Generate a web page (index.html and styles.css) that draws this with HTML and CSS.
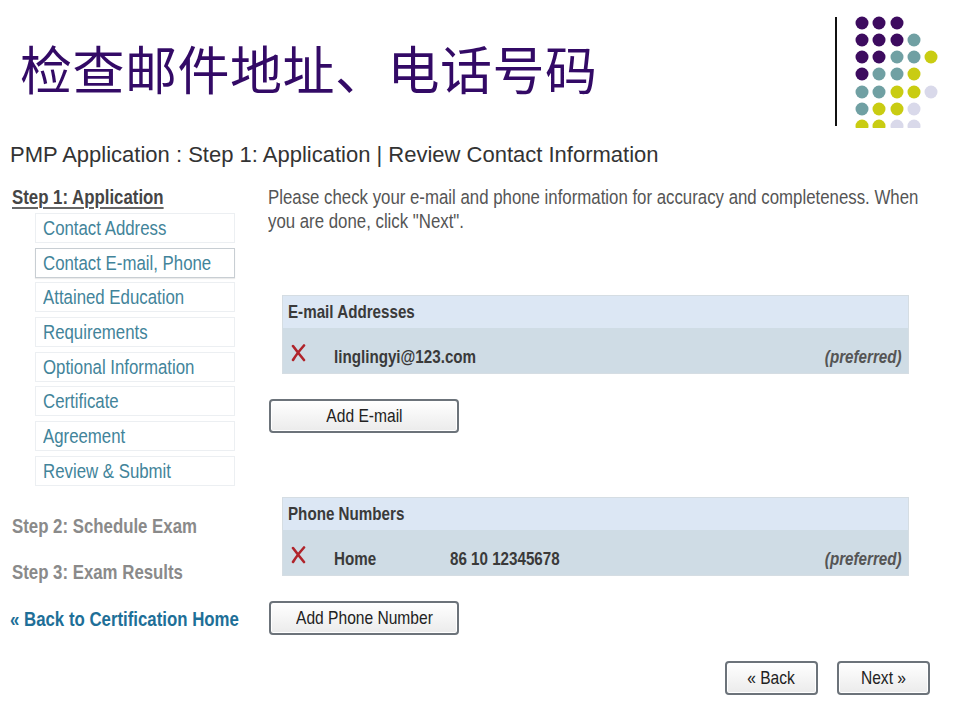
FILE: index.html
```html
<!DOCTYPE html>
<html lang="zh-CN">
<head>
    <meta charset="UTF-8">
    <meta name="viewport" content="width=device-width, initial-scale=1.0">
    <title>检查邮件地址、电话号码</title>
    <link rel="stylesheet" href="styles.css">
</head>
<body>
    <div class="slide">
        <header class="slide-head">
            <h1 class="slide-title">检查邮件地址、电话号码</h1>
            <svg class="deco" width="124" height="128" viewBox="0 0 124 128">
                <line x1="1" y1="17" x2="1" y2="126" stroke="#111" stroke-width="2"/>
                <g fill="#3d0b5f">
                    <circle cx="27" cy="23" r="6.5"/><circle cx="44" cy="23" r="6.5"/><circle cx="62" cy="23" r="6.5"/>
                    <circle cx="27" cy="40" r="6.5"/><circle cx="44" cy="40" r="6.5"/><circle cx="62" cy="40" r="6.5"/>
                    <circle cx="27" cy="57" r="6.5"/><circle cx="44" cy="57" r="6.5"/>
                    <circle cx="27" cy="74" r="6.5"/>
                </g>
                <g fill="#70a0a3">
                    <circle cx="79" cy="40" r="6.5"/>
                    <circle cx="62" cy="57" r="6.5"/><circle cx="79" cy="57" r="6.5"/>
                    <circle cx="44" cy="74" r="6.5"/><circle cx="62" cy="74" r="6.5"/>
                    <circle cx="27" cy="92" r="6.5"/><circle cx="44" cy="92" r="6.5"/>
                    <circle cx="27" cy="109" r="6.5"/>
                </g>
                <g fill="#c9cc12">
                    <circle cx="96" cy="57" r="6.5"/>
                    <circle cx="79" cy="74" r="6.5"/>
                    <circle cx="62" cy="92" r="6.5"/><circle cx="79" cy="92" r="6.5"/>
                    <circle cx="44" cy="109" r="6.5"/><circle cx="62" cy="109" r="6.5"/>
                    <circle cx="27" cy="126" r="6.5"/><circle cx="44" cy="126" r="6.5"/>
                </g>
                <g fill="#d9d9ea">
                    <circle cx="96" cy="92" r="6.5"/>
                    <circle cx="79" cy="109" r="6.5"/>
                    <circle cx="62" cy="126" r="6.5"/><circle cx="79" cy="126" r="6.5"/>
                </g>
            </svg>
        </header>

        <div class="app">
            <h2 class="app-title">PMP Application : Step 1: Application | Review Contact Information</h2>

            <div class="app-body">
                <nav class="steps">
                    <div class="step current"><span class="nx">Step 1: Application</span></div>
                    <ul class="substeps">
                        <li><span class="nx">Contact Address</span></li>
                        <li class="active"><span class="nx">Contact E-mail, Phone</span></li>
                        <li><span class="nx">Attained Education</span></li>
                        <li><span class="nx">Requirements</span></li>
                        <li><span class="nx">Optional Information</span></li>
                        <li><span class="nx">Certificate</span></li>
                        <li><span class="nx">Agreement</span></li>
                        <li><span class="nx">Review &amp; Submit</span></li>
                    </ul>
                    <div class="step step-two"><span class="nx">Step 2: Schedule Exam</span></div>
                    <div class="step step-three"><span class="nx">Step 3: Exam Results</span></div>
                    <a class="back-link" href="#"><span class="nx">&laquo; Back to Certification Home</span></a>
                </nav>

                <main class="main">
                    <p class="intro">
                        <span class="nx">Please check your e-mail and phone information for accuracy and completeness. When</span><br>
                        <span class="nx">you are done, click "Next".</span>
                    </p>

                    <div class="info-box email-box">
                        <div class="info-head"><span class="nx">E-mail Addresses</span></div>
                        <div class="info-row">
                            <span class="cell-icon">
                                <svg width="17" height="18" viewBox="0 0 17 18"><path d="M3 2 C6 6 9 10 14 16 M14 1.5 C10 6 6 11 3 16" fill="none" stroke="#b0242b" stroke-width="2.6" stroke-linecap="round"/></svg>
                            </span>
                            <span class="cell-value"><span class="nx">linglingyi@123.com</span></span>
                            <span class="preferred"><span class="nx">(preferred)</span></span>
                        </div>
                    </div>
                    <button class="btn btn-wide"><span class="nx">Add E-mail</span></button>

                    <div class="info-box phone-box">
                        <div class="info-head"><span class="nx">Phone Numbers</span></div>
                        <div class="info-row">
                            <span class="cell-icon">
                                <svg width="17" height="18" viewBox="0 0 17 18"><path d="M3 2 C6 6 9 10 14 16 M14 1.5 C10 6 6 11 3 16" fill="none" stroke="#b0242b" stroke-width="2.6" stroke-linecap="round"/></svg>
                            </span>
                            <span class="cell-type"><span class="nx">Home</span></span>
                            <span class="cell-value"><span class="nx">86 10 12345678</span></span>
                            <span class="preferred"><span class="nx">(preferred)</span></span>
                        </div>
                    </div>
                    <button class="btn btn-wide"><span class="nx">Add Phone Number</span></button>

                    <div class="wizard-buttons">
                        <button class="btn btn-nav"><span class="nx">&laquo; Back</span></button>
                        <button class="btn btn-nav"><span class="nx">Next &raquo;</span></button>
                    </div>
                </main>
            </div>
        </div>
    </div>
</body>
</html>
```

FILE: styles.css
```css
* {
    margin: 0;
    padding: 0;
    box-sizing: border-box;
}

body {
    background: #fff;
    width: 960px;
    height: 720px;
    overflow: hidden;
    font-family: "Liberation Sans", Arial, sans-serif;
    color: #333;
}

.slide {
    position: relative;
    width: 960px;
    height: 720px;
    overflow: hidden;
}

/* the screenshot text is a narrow face, squeeze the sans to match */
.nx {
    display: inline-block;
    white-space: nowrap;
    transform: scaleX(0.82);
    transform-origin: 0 50%;
}

/* Slide header */
.slide-head {
    height: 142px;
    padding: 38px 0 0 20px;
}

.slide-title {
    font-family: "Noto Sans CJK SC", "Noto Sans", sans-serif;
    font-size: 52px;
    font-weight: 400;
    line-height: 60px;
    color: #330a66;
    letter-spacing: 0.5px;
}

.deco {
    position: absolute;
    top: 0;
    left: 835px;
}

/* Application screenshot */
.app {
    padding: 0 30px 0 10px;
}

.app-title {
    font-size: 22px;
    font-weight: 400;
    line-height: 26px;
    color: #333;
    margin-bottom: 16px;
}

.app-body {
    display: flex;
}

.steps {
    width: 258px;
    flex-shrink: 0;
    display: flex;
    flex-direction: column;
    align-items: flex-start;
}

.step {
    font-size: 20.5px;
    font-weight: bold;
    line-height: 26px;
    color: #8a8a8a;
    padding-left: 2px;
}

.step.current {
    color: #454545;
}

.step.current .nx {
    text-decoration: underline;
    text-decoration-thickness: 2px;
    text-decoration-color: #666;
    text-underline-offset: 3px;
}

.substeps {
    list-style: none;
    display: flex;
    flex-direction: column;
    gap: 4.7px;
    margin: 3px 0 0 25px;
}

.substeps li {
    width: 200px;
    height: 30px;
    line-height: 28px;
    border: 1px solid #eceff2;
    padding-left: 7px;
    font-size: 20.5px;
    color: #42849a;
}

.substeps li.active {
    border-color: #c8ced3;
    box-shadow: 0 1px 1px rgba(0,0,0,0.08);
}

.step-two {
    margin-top: 27px;
}

.step-three {
    margin-top: 20px;
}

.back-link {
    margin-top: 21px;
    font-size: 20.5px;
    font-weight: bold;
    line-height: 26px;
    color: #1e6f98;
    text-decoration: none;
}

.main {
    flex: 1;
    min-width: 0;
    display: flex;
    flex-direction: column;
    align-items: flex-start;
}

.intro {
    align-self: stretch;
    margin-top: 1px;
    font-size: 20.5px;
    line-height: 24px;
    color: #555;
}

.info-box {
    width: 627px;
    margin: 62px 0 0 14px;
    border: 1px solid #d5dde3;
    background: #cfdce5;
}

.phone-box {
    margin-top: 64px;
}

.info-head {
    height: 32px;
    line-height: 32px;
    padding-left: 5px;
    background: #dce7f4;
    font-size: 18.5px;
    font-weight: bold;
    color: #3a3a3a;
}

.info-row {
    height: 45px;
    display: flex;
    align-items: center;
    padding: 13px 6px 0 7px;
    font-size: 18.5px;
    font-weight: bold;
    color: #3a3a3a;
}

.cell-icon {
    width: 44px;
    display: flex;
    margin-top: -8px;
}

.cell-type {
    width: 116px;
}

.preferred {
    margin-left: auto;
    font-style: italic;
    color: #555;
}

.preferred .nx {
    transform-origin: 100% 50%;
}

.btn {
    font-family: "Liberation Sans", Arial, sans-serif;
    font-size: 19px;
    color: #222;
    height: 34px;
    border: 2px solid #6c737a;
    border-radius: 4px;
    background: linear-gradient(#ffffff, #ebebeb);
    box-shadow: inset 0 0 0 1px #fff;
    cursor: pointer;
}

.btn .nx {
    transform-origin: 50% 50%;
}

.btn-wide {
    width: 190px;
    margin: 25px 0 0 1px;
}

.wizard-buttons {
    align-self: stretch;
    display: flex;
    justify-content: flex-end;
    gap: 19px;
    margin-top: 26px;
}

.btn-nav {
    width: 93px;
}
```
